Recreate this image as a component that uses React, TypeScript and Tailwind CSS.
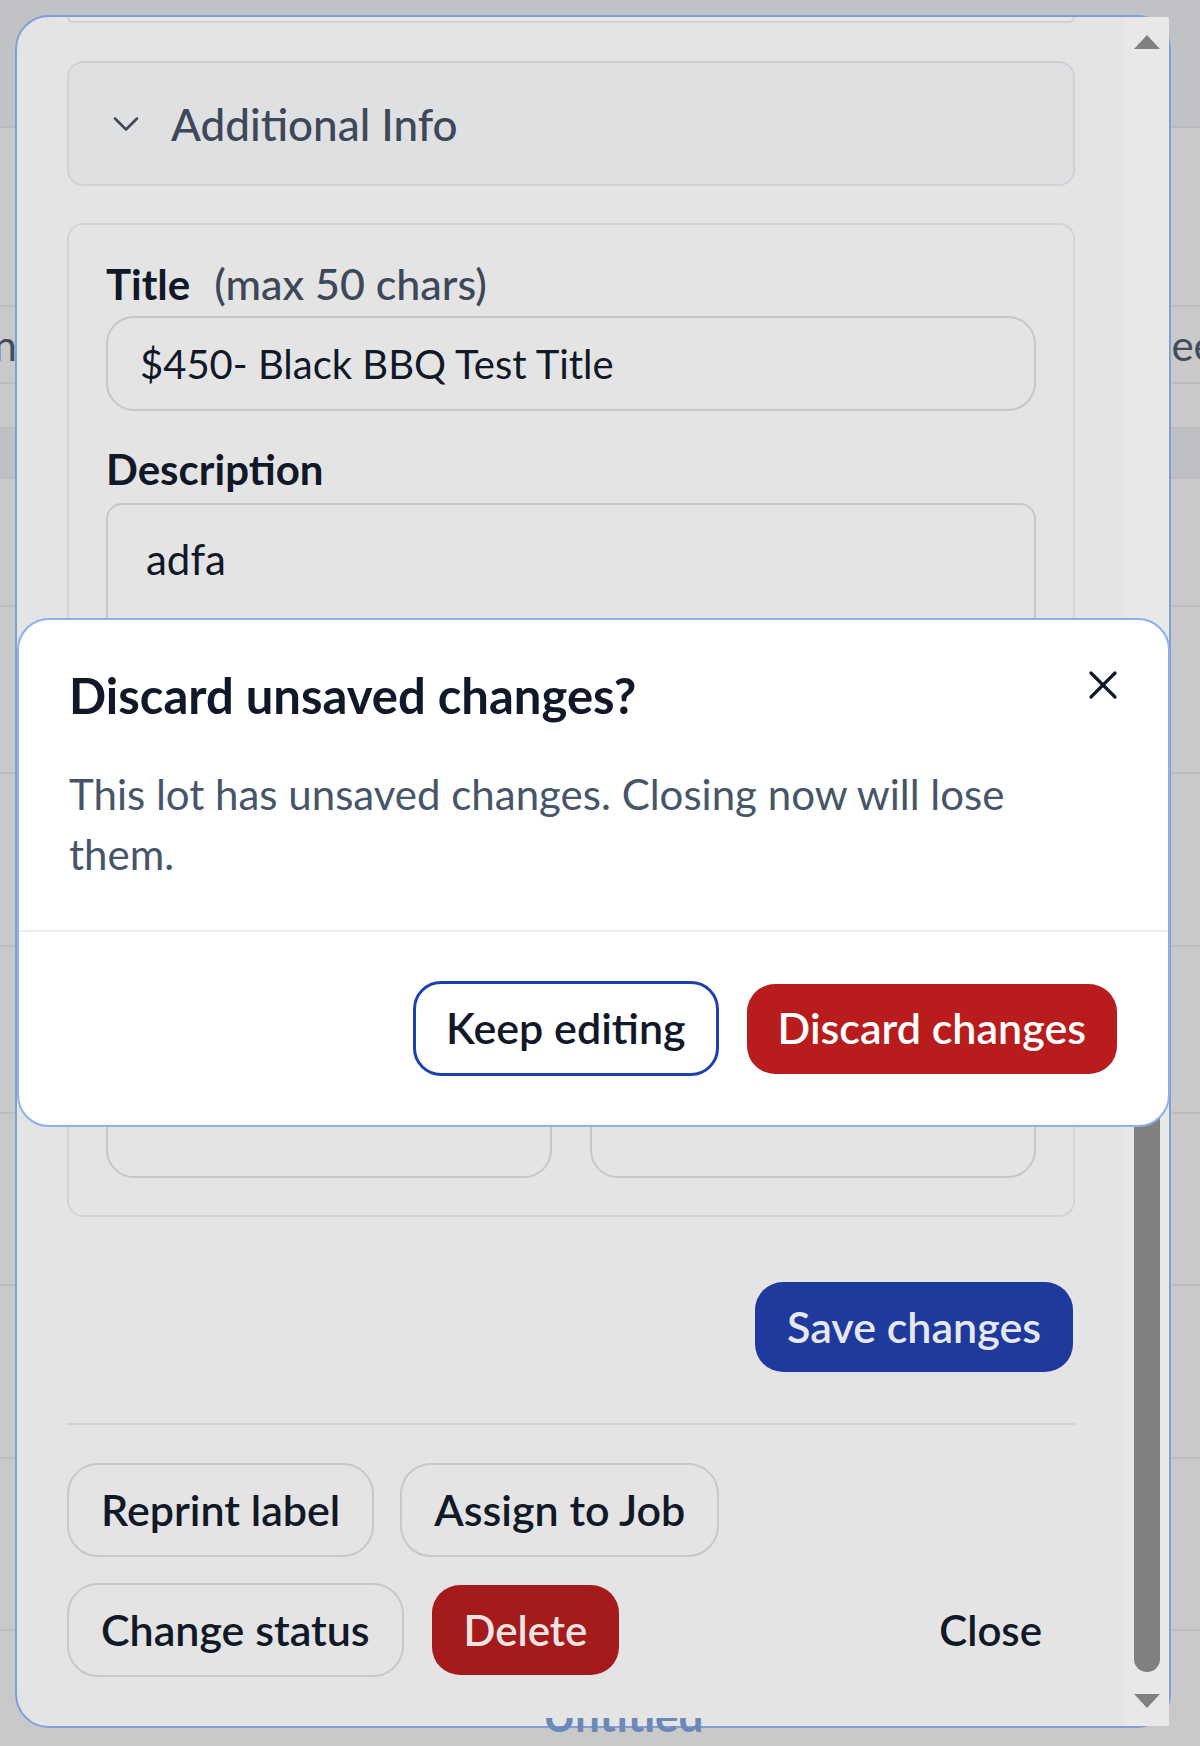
import { ChevronDown, X } from "lucide-react";

// row heights of the lots table sitting behind the modal
const tableRows = [
  "h-[179px]",
  "h-[77px]",
  "h-[45px]",
  "h-[50px] bg-[#bfc0c3]",
  "h-[128px]",
  "h-[167px]",
  "h-[173px]",
  "h-[167px]",
  "h-[172px]",
  "h-[173px]",
  "h-[172px]",
];

function LotTable() {
  return (
    <div className="flex flex-col">
      <div className="h-[128px] shrink-0 border-b-2 border-[#b9babc] bg-[#c1c2c5]" />
      {tableRows.map((row, i) =>
        i === 1 ? (
          <div
            key={i}
            className={`flex shrink-0 items-center overflow-hidden whitespace-nowrap border-b-2 border-[#bdbdbf] text-[42px] leading-[50px] text-[#434c5b] ${row}`}
          >
            <div className="flex w-[17px] shrink-0 justify-end overflow-hidden">
              <span>Condition</span>
            </div>
            <div className="w-[1123px] shrink-0" />
            <span>Needed</span>
          </div>
        ) : (
          <div key={i} className={`shrink-0 border-b-2 border-[#bdbdbf] ${row}`} />
        ),
      )}
    </div>
  );
}

function Field({ label, value }: { label: string; value?: string }) {
  return (
    <div className="flex flex-col">
      <label className="text-[42px] font-bold leading-[50px] text-[#111827]">{label}</label>
      <input
        readOnly
        value={value ?? ""}
        className="mt-[7px] h-[95px] w-full rounded-[28px] border-2 border-[#c7c7cb] bg-transparent px-[32px] text-[40px] text-[#111827] outline-none"
      />
    </div>
  );
}

function OutlineButton({ children }: { children: React.ReactNode }) {
  return (
    <button className="h-[94px] shrink-0 rounded-[31px] border-2 border-[#c8c8cc] px-[32px] text-[43px] font-semibold text-[#111827]">
      {children}
    </button>
  );
}

function ScrollTrack() {
  return (
    <div className="flex w-[45px] shrink-0 flex-col items-center bg-[#e8e8e8] pb-[18px] pt-[18px]">
      <svg width="26" height="14" viewBox="0 0 26 14">
        <path d="M13 0 L26 14 L0 14 Z" fill="#808080" />
      </svg>
      <div className="mt-[651px] w-[26px] flex-1 rounded-[13px] bg-[#808080]" />
      <svg width="26" height="14" viewBox="0 0 26 14" className="mt-[22px]">
        <path d="M0 0 L26 0 L13 14 Z" fill="#808080" />
      </svg>
    </div>
  );
}

function LotModal() {
  return (
    <div className="absolute left-[15px] top-[15px] flex h-[1713px] w-[1156px] rounded-[34px] border-2 border-[#7f9fd9] bg-[#e4e4e4]">
      <div className="flex min-w-0 flex-1 flex-col overflow-hidden pl-[50px] pr-[49px]">
        {/* bottom edge of the card above, scrolled out of view */}
        <div className="h-[6px] shrink-0 rounded-b-[16px] border-2 border-t-0 border-[#cfd0d3] bg-[#e6e6e4]" />

        <div className="mt-[38px] flex h-[125px] shrink-0 items-center gap-[23px] rounded-[16px] border-2 border-[#d0d1d4] bg-[#dfe0e2] pl-[35px]">
          <ChevronDown size={44} strokeWidth={1.4} className="text-[#3e4859]" />
          <span className="text-[44px] font-medium leading-[50px] text-[#3e4859]">Additional Info</span>
        </div>

        <div className="mt-[37px] shrink-0 rounded-[16px] border-2 border-[#d3d3d6] px-[37px] pb-[37px] pt-[34px]">
          <label className="flex items-baseline text-[42px] leading-[50px]">
            <span className="font-bold text-[#111827]">Title</span>
            <span className="ml-[24px] text-[43px] font-medium text-[#3e4859]">(max 50 chars)</span>
          </label>
          <input
            readOnly
            value="$450- Black BBQ Test Title"
            className="mt-[7px] h-[95px] w-full rounded-[28px] border-2 border-[#c7c7cb] bg-transparent px-[32px] text-[40px] text-[#111827] outline-none"
          />

          <label className="mt-[33px] block text-[42px] font-bold leading-[50px] text-[#111827]">
            Description
          </label>
          <textarea
            readOnly
            value="adfa"
            className="mt-[9px] block h-[305px] w-full resize-none rounded-[16px] border-2 border-[#c7c7cb] bg-transparent px-[38px] pt-[29px] text-[42px] leading-[50px] text-[#111827] outline-none"
          />

          <div className="mt-[33px] grid grid-cols-2 gap-x-[38px] gap-y-[33px]">
            <Field label="Category" value="Grills" />
            <Field label="Condition" value="Used" />
            <Field label="Price" />
            <Field label="Quantity" />
          </div>
        </div>

        <button className="mr-[2px] mt-[65px] h-[90px] shrink-0 self-end rounded-[28px] bg-[#1e3a9c] px-[32px] text-[43px] font-semibold text-[#e6e8ef]">
          Save changes
        </button>

        <div className="mt-[51px] h-[2px] shrink-0 bg-[#d3d3d5]" />

        <div className="mt-[38px] flex shrink-0 gap-[26px]">
          <OutlineButton>Reprint label</OutlineButton>
          <OutlineButton>Assign to Job</OutlineButton>
        </div>

        <div className="mt-[26px] flex shrink-0 items-center gap-[28px]">
          <OutlineButton>Change status</OutlineButton>
          <button className="h-[90px] shrink-0 rounded-[28px] bg-[#a51a1a] px-[32px] text-[42px] font-semibold text-[#ebe4e4]">
            Delete
          </button>
          <button className="ml-auto h-[90px] shrink-0 px-[33px] text-[42px] font-semibold text-[#111827]">
            Close
          </button>
        </div>
      </div>
      <ScrollTrack />
    </div>
  );
}

function DiscardDialog() {
  return (
    <div className="absolute left-[17px] top-[618px] flex h-[509px] w-[1153px] flex-col rounded-[32px] border-2 border-[#8db0ef] bg-white">
      <div className="pb-[46px] pl-[50px] pr-[41px] pt-[48px]">
        <div className="flex items-start justify-between">
          <h2 className="text-[49px] font-bold leading-[54px] text-[#111827]">Discard unsaved changes?</h2>
          <button className="-mt-[7px] text-[#111827]">
            <X size={48} strokeWidth={1.6} />
          </button>
        </div>
        <p className="mt-[42px] max-w-[1020px] text-[42px] leading-[60px] text-[#475569]">
          This lot has unsaved changes. Closing now will lose them.
        </p>
      </div>
      <div className="flex flex-1 items-center justify-end gap-[28px] border-t-2 border-[#eeeeee] pr-[51px]">
        <button className="h-[95px] rounded-[28px] border-[3px] border-[#1e40af] px-[30px] text-[43px] font-semibold text-[#111827]">
          Keep editing
        </button>
        <button className="h-[90px] rounded-[28px] bg-[#b91c1c] px-[31px] text-[43px] font-semibold text-white">
          Discard changes
        </button>
      </div>
    </div>
  );
}

export default function App() {
  return (
    <div className="relative h-[1746px] w-[1200px] overflow-hidden bg-[#c9c9ca] font-['Lato',sans-serif]">
      <LotTable />
      <LotModal />
      <DiscardDialog />
      {/* lower half of the next section heading, showing past the modal's bottom edge */}
      <div className="absolute left-[543px] top-[1718px] h-[15px] overflow-hidden whitespace-nowrap text-[44px] font-bold leading-[50px] text-[#6d88b6]">
        <div className="-mt-[28px]">Untitled</div>
      </div>
    </div>
  );
}
